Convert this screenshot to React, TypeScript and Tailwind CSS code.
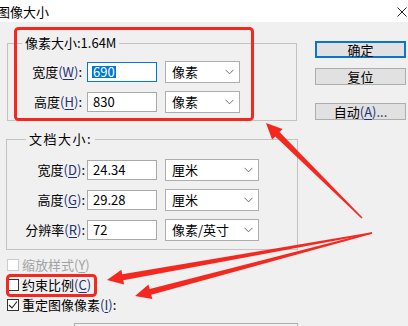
import React from "react";

const FONT = { fontFamily: '"Noto Sans CJK SC", "Noto Sans", sans-serif' };

function arrowPoints(
  tx: number,
  ty: number,
  hx: number,
  hy: number,
  headLen = 16,
  headHalf = 7.5,
  shaftBase = 3,
  shaftTail = 0.7
) {
  const dx = hx - tx;
  const dy = hy - ty;
  const len = Math.hypot(dx, dy);
  const ux = dx / len;
  const uy = dy / len;
  const nx = -uy;
  const ny = ux;
  const bx = hx - ux * headLen;
  const by = hy - uy * headLen;
  const pts = [
    [tx + nx * shaftTail, ty + ny * shaftTail],
    [bx + nx * shaftBase, by + ny * shaftBase],
    [bx + nx * headHalf, by + ny * headHalf],
    [hx, hy],
    [bx - nx * headHalf, by - ny * headHalf],
    [bx - nx * shaftBase, by - ny * shaftBase],
    [tx - nx * shaftTail, ty - ny * shaftTail],
  ];
  return pts.map((p) => p.map((v) => v.toFixed(1)).join(",")).join(" ");
}

function Acc({ label, k }: { label: string; k: string }) {
  return (
    <span>
      {label}
      <span className="text-[#1e3170]">
        (<span className="underline underline-offset-2">{k}</span>)
      </span>
      :
    </span>
  );
}

function Chevron() {
  return (
    <svg width="9" height="6" viewBox="0 0 9 6" className="shrink-0">
      <path d="M0.5 0.8 L4.5 4.8 L8.5 0.8" fill="none" stroke="#6d6d6d" strokeWidth="1" />
    </svg>
  );
}

function Select({ text, w }: { text: string; w: string }) {
  return (
    <div
      className={`${w} h-[22px] ml-[8px] bg-white border border-[#adadad] flex items-center justify-between pl-[6px] pr-[5px] text-[13px] text-black`}
    >
      <span>{text}</span>
      <Chevron />
    </div>
  );
}

function Input({ children, focused }: { children: React.ReactNode; focused?: boolean }) {
  return (
    <div
      className={`w-[70px] h-[20px] bg-white border ${
        focused ? "border-[#0078d7]" : "border-[#a9a9a9]"
      } flex items-center pl-[4px] text-[13px] text-black`}
    >
      {children}
    </div>
  );
}

function Row({
  label,
  k,
  value,
  unit,
  labelW,
  gap,
  selW,
  focused,
}: {
  label: string;
  k: string;
  value: string;
  unit: string;
  labelW: string;
  gap: string;
  selW: string;
  focused?: boolean;
}) {
  return (
    <div className="flex items-center h-[22px]">
      <div className={`${labelW} ${gap} text-right text-[13px] text-black whitespace-nowrap`}>
        <Acc label={label} k={k} />
      </div>
      <Input focused={focused}>
        {focused ? (
          <span className="bg-[#0078d7] text-white leading-[12px] px-[1px]">{value}</span>
        ) : (
          <span className="pl-[1px]">{value}</span>
        )}
      </Input>
      <Select text={unit} w={selW} />
    </div>
  );
}

function Check({
  label,
  k,
  checked,
  disabled,
}: {
  label: string;
  k: string;
  checked?: boolean;
  disabled?: boolean;
}) {
  return (
    <div className="flex items-center h-[20px]">
      <div
        className={`w-[12px] h-[12px] border ${
          disabled ? "border-[#cccccc]" : "border-[#333333]"
        } bg-white flex items-center justify-center`}
      >
        {checked && (
          <svg width="10" height="10" viewBox="0 0 10 10">
            <path d="M1 5 L4 8 L9 1.5" fill="none" stroke="#222" strokeWidth="1.1" />
          </svg>
        )}
      </div>
      <span
        className={`ml-[3px] text-[13px] whitespace-nowrap ${
          disabled ? "text-[#a3a3a3]" : "text-black"
        }`}
      >
        {label}
        <span className={disabled ? "" : "text-[#1e3170]"}>
          (<span className="underline underline-offset-2">{k}</span>)
        </span>
        {checked ? ":" : ""}
      </span>
    </div>
  );
}

function Btn({
  children,
  primary,
  className = "",
}: {
  children: React.ReactNode;
  primary?: boolean;
  className?: string;
}) {
  return (
    <div
      className={`w-[91px] h-[17px] bg-[#e1e1e1] ${
        primary ? "border-2 border-[#0a74d2]" : "border border-[#adadad]"
      } flex items-center justify-center text-[13px] text-black leading-none ${className}`}
    >
      {children}
    </div>
  );
}

export default function App() {
  const red = "#f5281f";
  return (
    <div className="relative w-[408px] h-[326px] overflow-hidden bg-[#f0f0f0]" style={FONT}>
      {/* Title bar */}
      <div className="h-[22px] bg-white flex items-center justify-between">
        <span className="ml-[-3px] text-[13px] text-black leading-none">图像大小</span>
        <svg width="10" height="10" viewBox="0 0 10 10" className="mr-[1px] mt-[2px]">
          <path d="M0.5 0.5 L9.5 9.5 M9.5 0.5 L0.5 9.5" stroke="#222" strokeWidth="1" />
        </svg>
      </div>

      {/* Body */}
      <div className="flex">
        <div className="ml-[7px] w-[290px]">
          <fieldset className="mt-[13px] border border-[#c3c3c3] pt-[10px] pb-[7px]">
            <legend className="ml-[14px] px-[3px] text-[13px] leading-[16px] text-black">
              像素大小:1.64M
            </legend>
            <div className="flex flex-col gap-[8px]">
              <Row label="宽度" k="W" value="690" unit="像素" labelW="w-[74px]" gap="mr-[5px]" selW="w-[75px]" focused />
              <Row label="高度" k="H" value="830" unit="像素" labelW="w-[74px]" gap="mr-[5px]" selW="w-[75px]" />
            </div>
          </fieldset>

          <fieldset className="mt-[10px] ml-[-1px] w-[292px] border border-[#c3c3c3] pt-[12px] pb-[8px]">
            <legend className="ml-[19px] px-[3px] text-[13px] leading-[16px] tracking-[1.5px] text-black">
              文档大小:
            </legend>
            <div className="flex flex-col gap-[8px]">
              <Row label="宽度" k="D" value="24.34" unit="厘米" labelW="w-[78px]" gap="mr-[2px]" selW="w-[94px]" />
              <Row label="高度" k="G" value="29.28" unit="厘米" labelW="w-[78px]" gap="mr-[2px]" selW="w-[94px]" />
              <Row label="分辨率" k="R" value="72" unit="像素/英寸" labelW="w-[78px]" gap="mr-[2px]" selW="w-[94px]" />
            </div>
          </fieldset>

          <div className="mt-[5px]">
            <Check label="缩放样式" k="Y" disabled />
            <Check label="约束比例" k="C" />
            <Check label="重定图像像素" k="I" checked />
          </div>

          <div className="mt-[8px] ml-[67px] w-[224px] h-[12px] border border-[#adadad] bg-[#f0f0f0]" />
        </div>

        <div className="ml-[18px] pt-[19px] flex flex-col">
          <Btn primary>确定</Btn>
          <Btn className="mt-[10px]">复位</Btn>
          <Btn className="mt-[18px]">
            自动<span className="text-[#1e3170]">(<span className="underline underline-offset-2">A</span>)...</span>
          </Btn>
        </div>
      </div>

      {/* Annotations */}
      <svg
        className="absolute inset-0 pointer-events-none"
        width="408"
        height="326"
        viewBox="0 0 408 326"
      >
        <rect x="15.5" y="28.5" width="237" height="91" rx="3" fill="none" stroke={red} strokeWidth="3" />
        <rect x="7.5" y="275.5" width="88" height="20" rx="3" fill="none" stroke={red} strokeWidth="3" />
        <polygon points={arrowPoints(362, 218, 266, 123)} fill={red} />
        <polygon points={arrowPoints(372, 233, 107, 280)} fill={red} />
        <polygon points={arrowPoints(372, 233, 135, 296)} fill={red} />
      </svg>
    </div>
  );
}
